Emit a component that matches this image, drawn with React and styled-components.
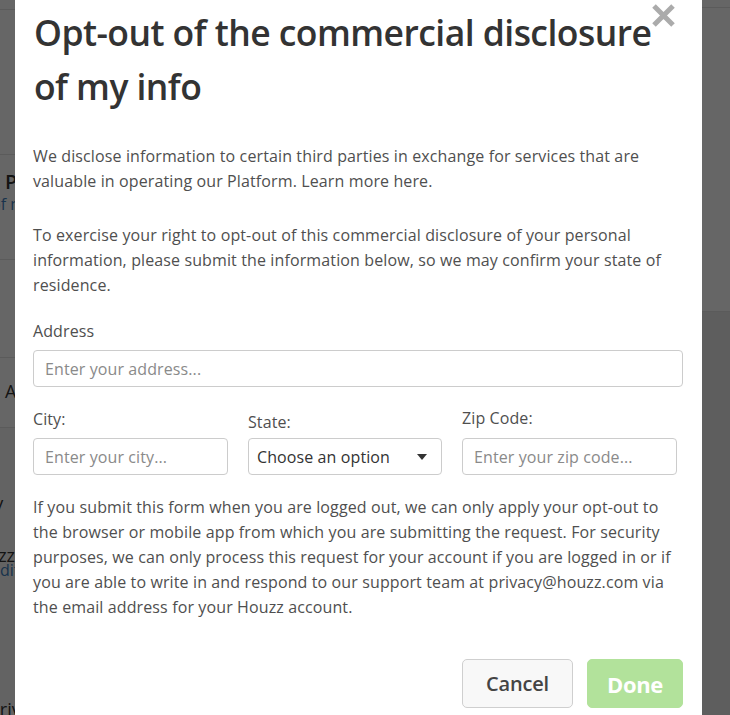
import React from 'react';
import styled, { createGlobalStyle } from 'styled-components';

const GlobalStyle = createGlobalStyle`
  html, body { margin: 0; padding: 0; background: #fff; }
  body { font-family: "Open Sans", "Liberation Sans", sans-serif; overflow: hidden; }
  * { box-sizing: border-box; }
`;

/* ---------- background page (dimmed) ---------- */
const BgPage = styled.div`
  width: 730px;
  height: 715px;
  overflow: hidden;
  display: grid;
  grid-template-columns: 360px 370px;
  color: #222;
`;

const BgColumn = styled.div`
  display: flex;
  flex-direction: column;
  min-width: 0;
  overflow: hidden;
`;

const BgRow = styled.div`
  height: ${p => (p.h ? `${p.h}px` : 'auto')};
  flex: ${p => (p.grow ? '1 1 auto' : '0 0 auto')};
  border-bottom: ${p => (p.line ? '1px solid #e4e4e4' : 'none')};
  background: ${p => p.bg || 'transparent'};
  display: flex;
  flex-direction: column;
  padding-top: ${p => p.pt || 0}px;
  padding-left: ${p => p.pl || 0}px;
`;

const BgHeading = styled.div`
  font-size: 20px;
  line-height: 20px;
  font-weight: 600;
  color: #333;
  white-space: nowrap;
  margin-left: ${p => p.ml || 0}px;
`;

const BgLink = styled.div`
  font-size: 16px;
  line-height: 16px;
  color: #3f7fbf;
  white-space: nowrap;
  margin-top: ${p => p.mt || 0}px;
  margin-left: ${p => p.ml || 0}px;
`;

const BgText = styled.div`
  font-size: 18px;
  line-height: 18px;
  color: #333;
  white-space: nowrap;
  margin-top: ${p => p.mt || 0}px;
  margin-left: ${p => p.ml || 0}px;
`;

/* ---------- overlay + modal ---------- */
const Overlay = styled.div`
  position: fixed;
  inset: 0;
  background: rgba(0, 0, 0, 0.6);
  overflow: hidden;
`;

const Modal = styled.div`
  position: relative;
  margin-left: 15px;
  width: 687px;
  min-height: 760px;
  background: #fff;
  padding: 4px 19px 40px 18px;
  display: flex;
  flex-direction: column;
`;

const CloseButton = styled.button`
  position: absolute;
  top: 4px;
  left: 636px;
  width: 25px;
  height: 24px;
  padding: 0;
  border: 0;
  background: transparent;
  cursor: pointer;
  display: flex;
  align-items: center;
  justify-content: center;
`;

const Title = styled.h1`
  margin: 1px 0 31px;
  font-size: 35.5px;
  line-height: 54px;
  font-weight: 600;
  letter-spacing: -0.55px;
  color: #333;
  padding-left: 1px;
`;

const Para = styled.p`
  margin: 0 0 ${p => p.mb || 0}px;
  font-size: 16px;
  line-height: 25px;
  color: #4f4f4f;
  letter-spacing: 0.12px;
`;

const Field = styled.div`
  display: flex;
  flex-direction: column;
`;

const Label = styled.label`
  font-size: 16px;
  line-height: 25px;
  color: #4f4f4f;
  letter-spacing: 0.1px;
  margin-top: ${p => p.shift || 0}px;
  margin-bottom: ${p => 6 - (p.shift || 0)}px;
`;

const TextInput = styled.input`
  width: 100%;
  height: 37px;
  border: 1px solid #cccccc;
  border-radius: 4px;
  padding: 0 11px;
  font-family: "Open Sans", "Liberation Sans", sans-serif;
  font-size: 16px;
  color: #333;
  background: #fff;
  outline: none;
  letter-spacing: 0.1px;
  &::placeholder { color: #8a8a8a; }
`;

const FieldRow = styled.div`
  display: grid;
  grid-template-columns: 195px 194px 215px;
  column-gap: 20px;
  margin: 20px 0 20px;
`;

const SelectBox = styled.div`
  height: 37px;
  border: 1px solid #cccccc;
  border-radius: 4px;
  padding: 0 14px 0 8px;
  display: flex;
  align-items: center;
  justify-content: space-between;
  font-size: 16px;
  color: #333;
  letter-spacing: 0.1px;
  background: #fff;
`;

const Caret = styled.span`
  width: 0;
  height: 0;
  border-left: 5px solid transparent;
  border-right: 5px solid transparent;
  border-top: 6px solid #333;
`;

const Actions = styled.div`
  display: flex;
  justify-content: flex-end;
  gap: 14px;
  margin-top: 39px;
`;

const Button = styled.button`
  height: 49px;
  width: ${p => p.w}px;
  border-radius: 5px;
  font-family: "Open Sans", "Liberation Sans", sans-serif;
  font-size: ${p => (p.primary ? 22 : 20)}px;
  font-weight: ${p => (p.primary ? 700 : 600)};
  letter-spacing: ${p => (p.primary ? '-0.4px' : '-0.2px')};
  color: ${p => (p.primary ? '#ffffff' : '#444444')};
  background: ${p => (p.primary ? '#b2e29b' : '#f8f8f8')};
  border: 1px solid ${p => (p.primary ? '#b2e29b' : '#cfcfcf')};
  padding: 0;
  cursor: ${p => (p.primary ? 'default' : 'pointer')};
`;

function CloseIcon() {
  return (
    <svg width="25" height="24" viewBox="0 0 25 24">
      <path d="M3 2 L22 21 M22 2 L3 21" stroke="#ababab" strokeWidth="5" strokeLinecap="butt" />
    </svg>
  );
}

export default function App() {
  return (
    <>
      <GlobalStyle />
      <BgPage>
        <BgColumn>
          <BgRow h={10} line />
          <BgRow h={145} line />
          <BgRow h={105} line pt={17} pl={5}>
            <BgHeading>Privacy Preferences</BgHeading>
            <BgLink mt={4} ml={-14}>of my personal information</BgLink>
          </BgRow>
          <BgRow h={98} line />
          <BgRow h={70} line pt={24} pl={5}>
            <BgText>About Houzz</BgText>
          </BgRow>
          <BgRow grow pt={66} bg="#f8f8f8">
            <BgText ml={-56}>Privacy</BgText>
            <BgText mt={34} ml={-37}>Houzz</BgText>
            <BgLink mt={-2} ml={-9}>edit</BgLink>
            <BgText mt={122} ml={-11}>Private</BgText>
          </BgRow>
        </BgColumn>
        <BgColumn>
          <BgRow h={8} line />
          <BgRow h={304} line />
          <BgRow grow bg="#ececec" />
        </BgColumn>
      </BgPage>

      <Overlay>
        <Modal role="dialog" aria-labelledby="optout-title">
          <CloseButton aria-label="Close">
            <CloseIcon />
          </CloseButton>

          <Title id="optout-title">Opt-out of the commercial disclosure of my info</Title>

          <Para mb={29}>
            We disclose information to certain third parties in exchange for services that are<br />
            valuable in operating our Platform. Learn more here.
          </Para>

          <Para mb={21}>
            To exercise your right to opt-out of this commercial disclosure of your personal<br />
            information, please submit the information below, so we may confirm your state of<br />
            residence.
          </Para>

          <Field>
            <Label>Address</Label>
            <TextInput placeholder="Enter your address..." />
          </Field>

          <FieldRow>
            <Field>
              <Label>City:</Label>
              <TextInput placeholder="Enter your city..." />
            </Field>
            <Field>
              <Label shift={3}>State:</Label>
              <SelectBox>
                <span>Choose an option</span>
                <Caret />
              </SelectBox>
            </Field>
            <Field>
              <Label shift={-1}>Zip Code:</Label>
              <TextInput placeholder="Enter your zip code..." />
            </Field>
          </FieldRow>

          <Para>
            If you submit this form when you are logged out, we can only apply your opt-out to<br />
            the browser or mobile app from which you are submitting the request. For security<br />
            purposes, we can only process this request for your account if you are logged in or if<br />
            you are able to write in and respond to our support team at privacy@houzz.com via<br />
            the email address for your Houzz account.
          </Para>

          <Actions>
            <Button w={111}>Cancel</Button>
            <Button w={96} primary disabled>Done</Button>
          </Actions>
        </Modal>
      </Overlay>
    </>
  );
}
